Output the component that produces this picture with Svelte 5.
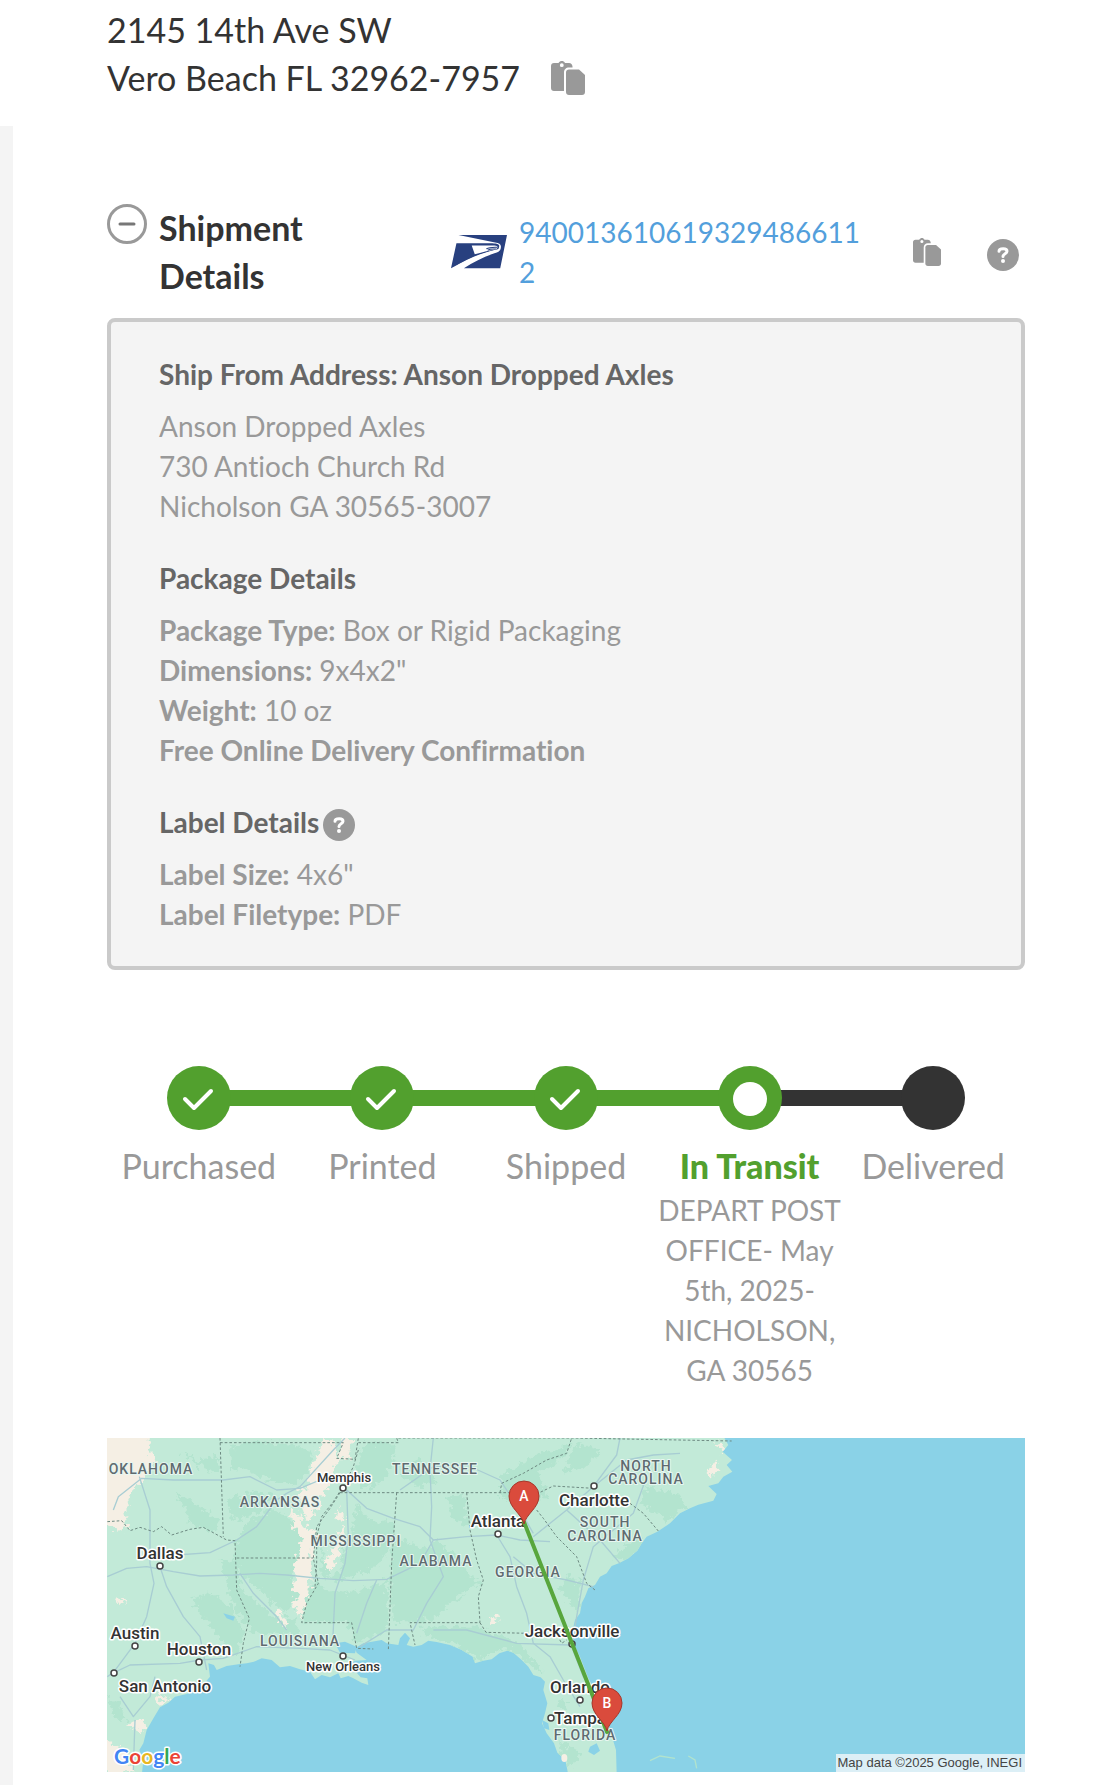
<script lang="ts">
	interface Step {
		label: string;
		state: 'done' | 'current' | 'pending';
		note?: string;
	}

	interface MapLabel {
		text: string;
		x: number;
		y: number;
		kind: 'city' | 'town' | 'region';
	}

	const trackingNumber = '9400136106193294866112';

	const steps: Step[] = [
		{ label: 'Purchased', state: 'done' },
		{ label: 'Printed', state: 'done' },
		{ label: 'Shipped', state: 'done' },
		{
			label: 'In Transit',
			state: 'current',
			note: 'DEPART POST OFFICE- May 5th, 2025- NICHOLSON, GA 30565'
		},
		{ label: 'Delivered', state: 'pending' }
	];

	const shipFrom = ['Anson Dropped Axles', '730 Antioch Church Rd', 'Nicholson GA 30565-3007'];

	const packageDetails = [
		{ name: 'Package Type:', value: 'Box or Rigid Packaging' },
		{ name: 'Dimensions:', value: '9x4x2"' },
		{ name: 'Weight:', value: '10 oz' },
		{ name: 'Free Online Delivery Confirmation', value: '' }
	];

	const labelDetails = [
		{ name: 'Label Size:', value: '4x6"' },
		{ name: 'Label Filetype:', value: 'PDF' }
	];

	const mapLabels: MapLabel[] = [
		{ text: 'OKLAHOMA', x: 44, y: 36, kind: 'region' },
		{ text: 'ARKANSAS', x: 173, y: 69, kind: 'region' },
		{ text: 'TENNESSEE', x: 328, y: 36, kind: 'region' },
		{ text: 'MISSISSIPPI', x: 249, y: 108, kind: 'region' },
		{ text: 'ALABAMA', x: 329, y: 128, kind: 'region' },
		{ text: 'LOUISIANA', x: 193, y: 208, kind: 'region' },
		{ text: 'NORTH', x: 539, y: 33, kind: 'region' },
		{ text: 'CAROLINA', x: 539, y: 46, kind: 'region' },
		{ text: 'SOUTH', x: 498, y: 89, kind: 'region' },
		{ text: 'CAROLINA', x: 498, y: 103, kind: 'region' },
		{ text: 'GEORGIA', x: 421, y: 139, kind: 'region' },
		{ text: 'FLORIDA', x: 478, y: 302, kind: 'region' },
		{ text: 'Memphis', x: 237, y: 44, kind: 'town' },
		{ text: 'New Orleans', x: 236, y: 233, kind: 'town' },
		{ text: 'Dallas', x: 53, y: 121, kind: 'city' },
		{ text: 'Austin', x: 28, y: 201, kind: 'city' },
		{ text: 'Houston', x: 92, y: 217, kind: 'city' },
		{ text: 'San Antonio', x: 58, y: 254, kind: 'city' },
		{ text: 'Charlotte', x: 487, y: 68, kind: 'city' },
		{ text: 'Atlanta', x: 391, y: 89, kind: 'city' },
		{ text: 'Jacksonville', x: 465, y: 199, kind: 'city' },
		{ text: 'Orlando', x: 473, y: 255, kind: 'city' },
		{ text: 'Tampa', x: 473, y: 286, kind: 'city' }
	];

	const towns = [
		[236, 50], [53, 128], [28, 208], [92, 224], [7, 235], [236, 218],
		[487, 48], [391, 96], [465, 206], [473, 262], [444, 280]
	];

	const pins = [
		{ name: 'A', x: 417, y: 58 },
		{ name: 'B', x: 500, y: 265 }
	];

	let open = $state(true);

	function copy(text: string) {
		navigator.clipboard?.writeText(text);
	}
</script>

{#snippet copyIcon()}
	<svg viewBox="0 0 34 34" aria-hidden="true">
		<path
			fill="#999"
			fill-rule="evenodd"
			d="M3 2H7.500C8.500 .6 9.500 0 10.800 0C12.200 0 13.200 .6 14 2H18C20 2 21.300 3.300 21.500 5.500V6.500H18C15 6.500 13 8.500 13 11.500V30H3C1.200 30 0 28.800 0 27V5C0 3.200 1.200 2 3 2ZM10.800 2.300A1.900 1.900 0 1 0 10.800 6.100A1.900 1.900 0 1 0 10.800 2.300Z"
		/>
		<path fill="#999" d="M18 8.500H28L34 14V31C34 32.800 32.800 34 31 34H18C16.200 34 15 32.800 15 31V11.500C15 9.700 16.200 8.500 18 8.500Z" />
	</svg>
{/snippet}

{#snippet helpIcon()}
	<svg viewBox="0 0 32 32" aria-hidden="true">
		<circle cx="16" cy="16" r="16" fill="#999" />
		<path
			d="M12 12.200C12 10.300 13.600 9.700 16.200 9.700C18.800 9.700 20 10.500 20 12.300C20 14.800 16 14.600 16 17.500"
			fill="none"
			stroke="#fff"
			stroke-width="3"
			stroke-linecap="round"
		/>
		<circle cx="16" cy="22" r="2" fill="#fff" />
	</svg>
{/snippet}

<main>
	<section class="address">
		<div>2145 14th Ave SW</div>
		<div class="address-last">
			<span>Vero Beach FL 32962-7957</span>
			<button
				class="icon copy-large"
				aria-label="Copy address"
				onclick={() => copy('2145 14th Ave SW\nVero Beach FL 32962-7957')}
			>
				{@render copyIcon()}
			</button>
		</div>
	</section>

	<section class="shipment">
		<header>
			<button class="icon toggle" aria-label="Toggle shipment details" aria-expanded={open} onclick={() => (open = !open)}>
				<svg viewBox="0 0 40 40" aria-hidden="true">
					<circle cx="20" cy="20" r="18.500" fill="none" stroke="#999" stroke-width="3" />
					<path d="M13 20H27" stroke="#777" stroke-width="3" stroke-linecap="round" />
					{#if !open}
						<path d="M20 13V27" stroke="#777" stroke-width="3" stroke-linecap="round" />
					{/if}
				</svg>
			</button>
			<h2>Shipment Details</h2>
			<div class="tracking">
				<svg class="usps" viewBox="0 0 165 99" role="img" aria-label="USPS">
					<path fill="#28407f" d="M22 0H165L145 98H38C66 80 98 64 128 54C142 50 146 46 147 36C148 27 142 24 130 22Z" />
					<path fill="#28407f" d="M16 24H122C136 25 143 27 142 33C141 42 138 45 122 47C84 56 40 76 0 98Z" />
					<path fill="#fff" d="M61 31H128C134 31 138 33 137 37L134 42C112 46 90 51 70 57Z" />
					<path fill="none" stroke="#28407f" stroke-width="3" d="M104 41C114 35 124 36 136 36M108 45C116 40 124 42 134 41" />
					<path fill="#fff" d="M6 97C44 71 88 54 128 44L140 42C138 48 134 50 124 53C92 64 60 80 32 98Z" />
				</svg>
				<a href="#tracking">{trackingNumber}</a>
			</div>
			<button class="icon copy-small" aria-label="Copy tracking number" onclick={() => copy(trackingNumber)}>
				{@render copyIcon()}
			</button>
			<button class="icon help" aria-label="Tracking help">{@render helpIcon()}</button>
		</header>

		{#if open}
			<div class="panel">
				<h3>Ship From Address: Anson Dropped Axles</h3>
				{#each shipFrom as line}
					<p>{line}</p>
				{/each}

				<h3>Package Details</h3>
				{#each packageDetails as item}
					<p><strong>{item.name}</strong> {item.value}</p>
				{/each}

				<h3>
					Label Details
					<button class="icon help" aria-label="Label help">{@render helpIcon()}</button>
				</h3>
				{#each labelDetails as item}
					<p><strong>{item.name}</strong> {item.value}</p>
				{/each}
			</div>
		{/if}

		<ol class="steps">
			{#each steps as step}
				<li class={step.state}>
					<span class="dot">
						{#if step.state === 'done'}
							<svg viewBox="0 0 64 64" aria-hidden="true">
								<path d="M18 33L27 42L44 25" fill="none" stroke="#fff" stroke-width="4" stroke-linecap="round" stroke-linejoin="round" />
							</svg>
						{:else if step.state === 'current'}
							<svg viewBox="0 0 64 64" aria-hidden="true">
								<circle cx="32" cy="33" r="17" fill="#fff" />
							</svg>
						{/if}
					</span>
					<span class="label">{step.label}</span>
					{#if step.note}
						<span class="note">{step.note}</span>
					{/if}
				</li>
			{/each}
		</ol>

		<svg class="map" viewBox="0 0 918 334" role="img" aria-label="Route from Nicholson to Vero Beach">
			<defs>
				<filter id="rough" x="-5%" y="-5%" width="110%" height="110%">
					<feTurbulence type="fractalNoise" baseFrequency="0.06" numOctaves="3" seed="4" result="noise" />
					<feDisplacementMap in="SourceGraphic" in2="noise" scale="40" xChannelSelector="R" yChannelSelector="G" />
				</filter>
				<clipPath id="land">
					<use href="#coast" />
				</clipPath>
			</defs>
			<rect width="918" height="334" fill="#8ad2e7" />

			<!-- terrain, roads and borders are drawn at three times the map's scale -->
			<g transform="translate(-7 -8) scale(0.33333)">
				<path
					id="coast"
					fill="#c2ead8"
					d="M0 0H1860L1885 45L1868 65L1896 90L1880 105L1897 125L1870 140L1855 160L1825 168L1850 192L1840 212L1795 224L1770 235L1740 250L1710 280L1672 305L1640 320L1625 340L1612 362L1585 385L1560 398L1535 408L1520 430L1500 440L1485 465L1465 475L1455 500L1445 520L1440 550L1425 570L1418 600L1420 640L1440 680L1465 745L1490 790L1510 850L1530 900L1548 960L1550 1030H1404L1396 990L1372 968L1362 940L1340 910L1326 880L1335 850L1342 820L1330 780L1335 755L1322 742L1300 735L1285 710L1265 690L1240 668L1222 662L1198 670L1175 688L1150 692L1125 700L1118 680L1085 660L1050 645L1010 636L985 632L965 645L940 650L920 645L930 625L915 608L900 625L895 645L860 640L845 630L790 640L765 655L770 668L800 690L765 692L742 705L735 722L770 728L782 742L802 745L805 765L785 758L760 745L745 738L722 745L715 730L690 742L665 735L645 748L630 725L600 718L570 708L540 712L515 690L485 685L462 695L440 700L420 702L380 708L350 720L342 705L325 700L330 740L300 775L260 792L225 800L205 818L180 832L162 862L140 900L130 940L118 960L130 990L126 1030H0Z"
				/>

				<g clip-path="url(#land)">
					<g fill="#b3e4cf" filter="url(#rough)">
						<path d="M395 45L470 35L590 45L640 60L625 120L580 165L500 150L420 110L390 120Z" />
						<path d="M380 215L460 180L520 200L480 245L400 270Z" />
						<path d="M410 330L450 270L520 235L590 280L612 330L590 385L575 440L590 500L560 555L500 500L430 440L405 390Z" />
						<path d="M365 390L410 385L420 470L520 560L590 570L600 620L470 610L420 560L380 470Z" />
						<path d="M280 500L340 490L395 530L430 600L410 680L370 640L330 590L290 540Z" />
						<path d="M610 485L655 460L680 480L750 490L860 450L865 600L770 640L740 575L610 577Z" />
						<path d="M660 340L690 440L720 425L740 330L760 300L770 220L820 280L885 270L880 330L840 400L790 430L720 450L665 440Z" />
						<path d="M790 40L890 40L880 90L850 160L780 180L765 130Z" />
						<path d="M900 130L960 90L1010 150L960 175Z" />
						<path d="M885 320L980 360L1010 330L1060 370L1115 440L1140 460L1050 520L1000 570L880 580L868 460Z" />
						<path d="M1040 200L1090 195L1110 290L1060 270Z" />
						<path d="M1200 140L1290 80L1420 40L1380 90L1320 130L1340 200L1280 230L1200 200Z" />
						<path d="M960 590L1130 590L1260 640L1330 730L1260 680L1220 655L1130 690L1080 650L980 620Z" />
						<path d="M240 65L290 90L350 80L360 130L300 110Z" />
						<path d="M230 190L300 230L360 270L350 310L270 280Z" />
						<path d="M1430 40L1500 60L1460 110L1390 130Z" />
						<path d="M1630 170L1740 195L1760 230L1700 275L1660 240L1620 220Z" />
						<path d="M1400 430L1440 460L1445 540L1420 530L1380 480Z" />
						<path d="M1540 380L1610 320L1640 340L1580 400Z" />
						<path d="M1380 810L1402 815L1395 840L1372 832Z" />
						<path d="M1370 930L1440 970L1420 1010L1390 990Z" />
						<path d="M22 800L60 820L80 870L40 860Z" />
					</g>

					<g fill="#f5efe4" filter="url(#rough)">
						<path d="M0 0H150L148 70L165 95L130 150L100 175L85 210L75 240L85 290L60 300L0 280Z" />
						<path d="M670 24H700L715 100L700 130L690 165L665 200L650 240L620 275L605 225L595 190L625 170L625 130L650 80Z" />
						<path d="M725 24H765L745 60L755 85L715 90Z" />
						<path d="M570 245L600 250L605 285L645 300L655 320L640 350L635 400L630 470L620 510L600 560L585 540L575 520L595 500L575 480L590 440L578 400L600 370L605 330L585 300Z" />
						<path d="M725 285L735 320L715 380L690 425L675 405L700 350L715 320Z" />
						<path d="M715 235L735 255L725 285L705 260Z" />
						<path d="M520 540L535 540L565 590L550 590Z" />
						<path d="M42 510L65 500L82 520L50 522Z" />
						<path d="M95 875L140 870L125 910L85 890Z" />
						<path d="M0 920L60 950L90 990L110 1030H0Z" />
						<path d="M165 805L185 790L205 805L190 825Z" />
						<path d="M1170 570L1190 555L1200 575L1180 582Z" />
						<path d="M1820 120L1850 95L1855 115L1830 140Z" />
						<path d="M1845 35L1880 55L1882 70L1850 50Z" />
					</g>
				</g>
				<ellipse cx="1393" cy="984" rx="9" ry="12" fill="#f5efe4" />

				<g fill="#8ad2e7">
					<path d="M705 640L735 635L770 650L765 670L720 668Z" />
					<path d="M1470 950L1490 940L1500 962L1482 975L1465 965Z" />
					<path d="M370 550L405 560L400 572L380 565Z" />
					<path d="M1326 870L1345 880L1348 900L1332 895Z" />
				</g>
				<path d="M1650 992L1680 978L1725 985M1765 978L1785 990L1790 1015" stroke="#b1e3cd" stroke-width="4" fill="none" />

				<g fill="none" stroke="#a8cdd3" stroke-width="4" stroke-linejoin="round">
					<path d="M22 440L80 415L140 410L220 425L300 438L400 435L480 430L560 435L660 445L760 452L860 448L960 400L1000 330L1100 320L1190 315L1260 330L1350 335" />
					<path d="M40 240L55 200L125 145L220 150L370 150L450 140L530 180L600 175L660 150L740 155" />
					<path d="M118 140L150 240L150 400L162 460L140 560L105 640L40 728L22 740" />
					<path d="M180 410L200 470L250 560L300 620L320 720M42 728L90 705L240 700L300 690L370 685L470 650L600 655L690 660L765 690" />
					<path d="M230 375L330 368L410 330L470 290L530 210L560 190L600 170L700 60L735 24" />
					<path d="M740 180L745 320L735 400L705 490L698 640M740 180L800 235L880 265L960 290L1000 330" />
					<path d="M1000 24L990 120L995 230L990 330L1030 440L980 520L940 600L860 600L780 650M420 430L460 490L530 560L560 600M830 450L800 520L770 610" />
					<path d="M900 180L1000 110L1100 105L1200 150L1260 240L1300 310M1190 315L1230 380L1250 470L1280 550L1300 640L1350 680L1390 750L1440 830" />
					<path d="M1300 320L1400 240L1480 170L1580 90L1660 75L1740 70M1480 170L1550 75L1560 24M1400 240L1500 330L1560 400M1240 380L1300 430L1400 450L1480 470" />
					<path d="M1640 140L1600 250L1480 350L1450 450L1430 560L1415 650L1450 740L1530 850M1000 600L1100 600L1250 640L1410 645" />
					<path d="M60 800L100 860L150 800L165 740M105 870L100 1020" />
				</g>

				<g fill="none" stroke="#6d8a82" stroke-width="3" stroke-dasharray="8 6">
					<path d="M22 275L65 272L90 302L120 292L160 305L185 290L215 315L270 298L310 292L380 330L405 332L410 480L448 565L430 640L420 710" />
					<path d="M360 24L370 320M360 38L730 38L710 85L765 88L775 24M775 38H895L890 24H1360L1420 24L1895 33" />
					<path d="M410 384H640M720 188H1225M890 188L875 400L865 660M720 188L690 235L650 290L640 384L655 460L620 520L605 578H755L770 655L820 657" />
					<path d="M775 60L760 110L735 160L700 215L665 260L650 320L650 400L645 470" />
					<path d="M1100 188L1110 300L1130 390L1150 450L1135 500L1140 578H930L945 645M1140 578L1158 607L1370 612L1385 640L1400 630" />
					<path d="M1200 188L1205 160L1270 130L1340 90L1400 70L1415 24M1225 188L1310 192L1360 168L1480 175M1590 220L1630 250L1675 303" />
					<path d="M1310 240L1330 265L1370 320L1430 380L1460 460L1485 480" />
				</g>
			</g>

			{#each mapLabels as label}
				<text class={label.kind} x={label.x} y={label.y} text-anchor="middle">{label.text}</text>
			{/each}
			{#each towns as [x, y]}
				<circle cx={x} cy={y} r="3" fill="#fff" stroke="#444" stroke-width="1.500" />
			{/each}

			<path d="M417 84L500 294" stroke="#58a63d" stroke-width="4" stroke-linecap="round" />
			{#each pins as pin}
				<g transform="translate({pin.x} {pin.y})">
					<path d="M0 28C-2 18 -15 12 -15 0A15 15 0 0 1 15 0C15 12 2 18 0 28Z" fill="#da4b3c" stroke="#a5382c" />
					<text class="pin" y="5" text-anchor="middle">{pin.name}</text>
				</g>
			{/each}

			<text class="google" x="7" y="326">
				<tspan fill="#4285f4">G</tspan><tspan fill="#ea4335">o</tspan><tspan fill="#e8b722">o</tspan><tspan fill="#4285f4">g</tspan><tspan fill="#34a853">l</tspan><tspan fill="#ea4335">e</tspan>
			</text>
			<rect x="729" y="316" width="189" height="18" fill="#dceff6" />
			<text class="credit" x="915" y="329" text-anchor="end">Map data ©2025 Google, INEGI</text>
		</svg>
	</section>
</main>

<style>
	:global(body) {
		background: #fff;
	}

	main {
		font-family: Lato, 'Open Sans', sans-serif;
		font-size: 28px;
		line-height: 40px;
		font-variant-ligatures: no-common-ligatures;
		color: #999;
	}

	h2,
	h3,
	p,
	ol {
		margin: 0;
		padding: 0;
	}

	.icon {
		flex: none;
		display: block;
		padding: 0;
		border: none;
		background: none;
		cursor: pointer;
	}

	.icon svg {
		display: block;
		width: 100%;
	}

	.address {
		padding: 6px 94px 24px 107px;
		font-size: 34px;
		line-height: 48px;
		color: #333;
	}

	.address-last {
		display: flex;
		align-items: center;
		gap: 31px;
	}

	.copy-large {
		width: 34px;
	}

	.shipment {
		padding: 78px 94px 13px;
		border-left: 13px solid #f4f4f4;
	}

	header {
		display: flex;
		align-items: center;
		padding-right: 6px;
		margin-bottom: 18px;
	}

	.toggle {
		align-self: flex-start;
		width: 40px;
		margin-right: 12px;
	}

	h2 {
		flex: none;
		width: 180px;
		margin-right: 112px;
		font-size: 34px;
		line-height: 48px;
		font-weight: 700;
		color: #333;
	}

	.tracking {
		flex: 1;
		min-width: 0;
		display: flex;
		align-items: center;
		gap: 12px;
		margin-right: 48px;
	}

	.usps {
		flex: none;
		width: 56px;
	}

	.tracking a {
		color: #539fdc;
		text-decoration: none;
		word-break: break-all;
	}

	.copy-small {
		width: 28px;
		margin-right: 46px;
	}

	.help {
		width: 32px;
		padding-top: 6px;
	}

	.panel {
		padding: 32px 48px;
		border: 4px solid #cacaca;
		border-radius: 8px;
		background: #f4f4f4;
	}

	h3 {
		display: flex;
		align-items: center;
		gap: 4px;
		margin: 32px 0 12px;
		font-size: 28px;
		line-height: 40px;
		font-weight: 700;
		color: #666;
	}

	h3:first-child {
		margin-top: 0;
	}

	.steps {
		display: grid;
		grid-template-columns: repeat(5, 1fr);
		margin: 96px 0 48px;
		list-style: none;
	}

	.steps li {
		position: relative;
		display: flex;
		flex-direction: column;
		align-items: center;
		text-align: center;
	}

	/* connector back to the previous step */
	.steps li + li::before {
		content: '';
		position: absolute;
		top: 24px;
		right: 50%;
		width: 100%;
		height: 16px;
		background: #52a02e;
	}

	.steps li.pending::before {
		background: #333;
	}

	.dot {
		position: relative;
		z-index: 1;
		width: 64px;
		height: 64px;
		margin-bottom: 12px;
		border-radius: 50%;
		background: #52a02e;
	}

	.pending .dot {
		background: #333;
	}

	.dot svg {
		display: block;
	}

	.label {
		font-size: 34px;
		line-height: 48px;
	}

	.current .label {
		font-weight: 900;
		color: #52a02e;
	}

	.map {
		display: block;
		width: 100%;
		font-family: Roboto, sans-serif;
	}

	.map text {
		paint-order: stroke;
		stroke-linejoin: round;
	}

	.city,
	.town {
		font-size: 17px;
		font-weight: 500;
		fill: #333;
		stroke: #fff;
		stroke-width: 3px;
	}

	.town {
		font-size: 13px;
	}

	.region {
		font-size: 14px;
		font-weight: 500;
		letter-spacing: 1px;
		fill: #5f6b70;
		stroke: #e8f7f1;
		stroke-width: 2px;
	}

	.pin {
		font-size: 14px;
		font-weight: 500;
		fill: #fff;
	}

	.google {
		font-family: Lato, sans-serif;
		font-size: 21px;
		font-weight: 700;
		stroke: #fff;
		stroke-width: 3px;
	}

	.credit {
		font-family: 'Liberation Sans', Arial, sans-serif;
		font-size: 13px;
		fill: #444;
	}
</style>
